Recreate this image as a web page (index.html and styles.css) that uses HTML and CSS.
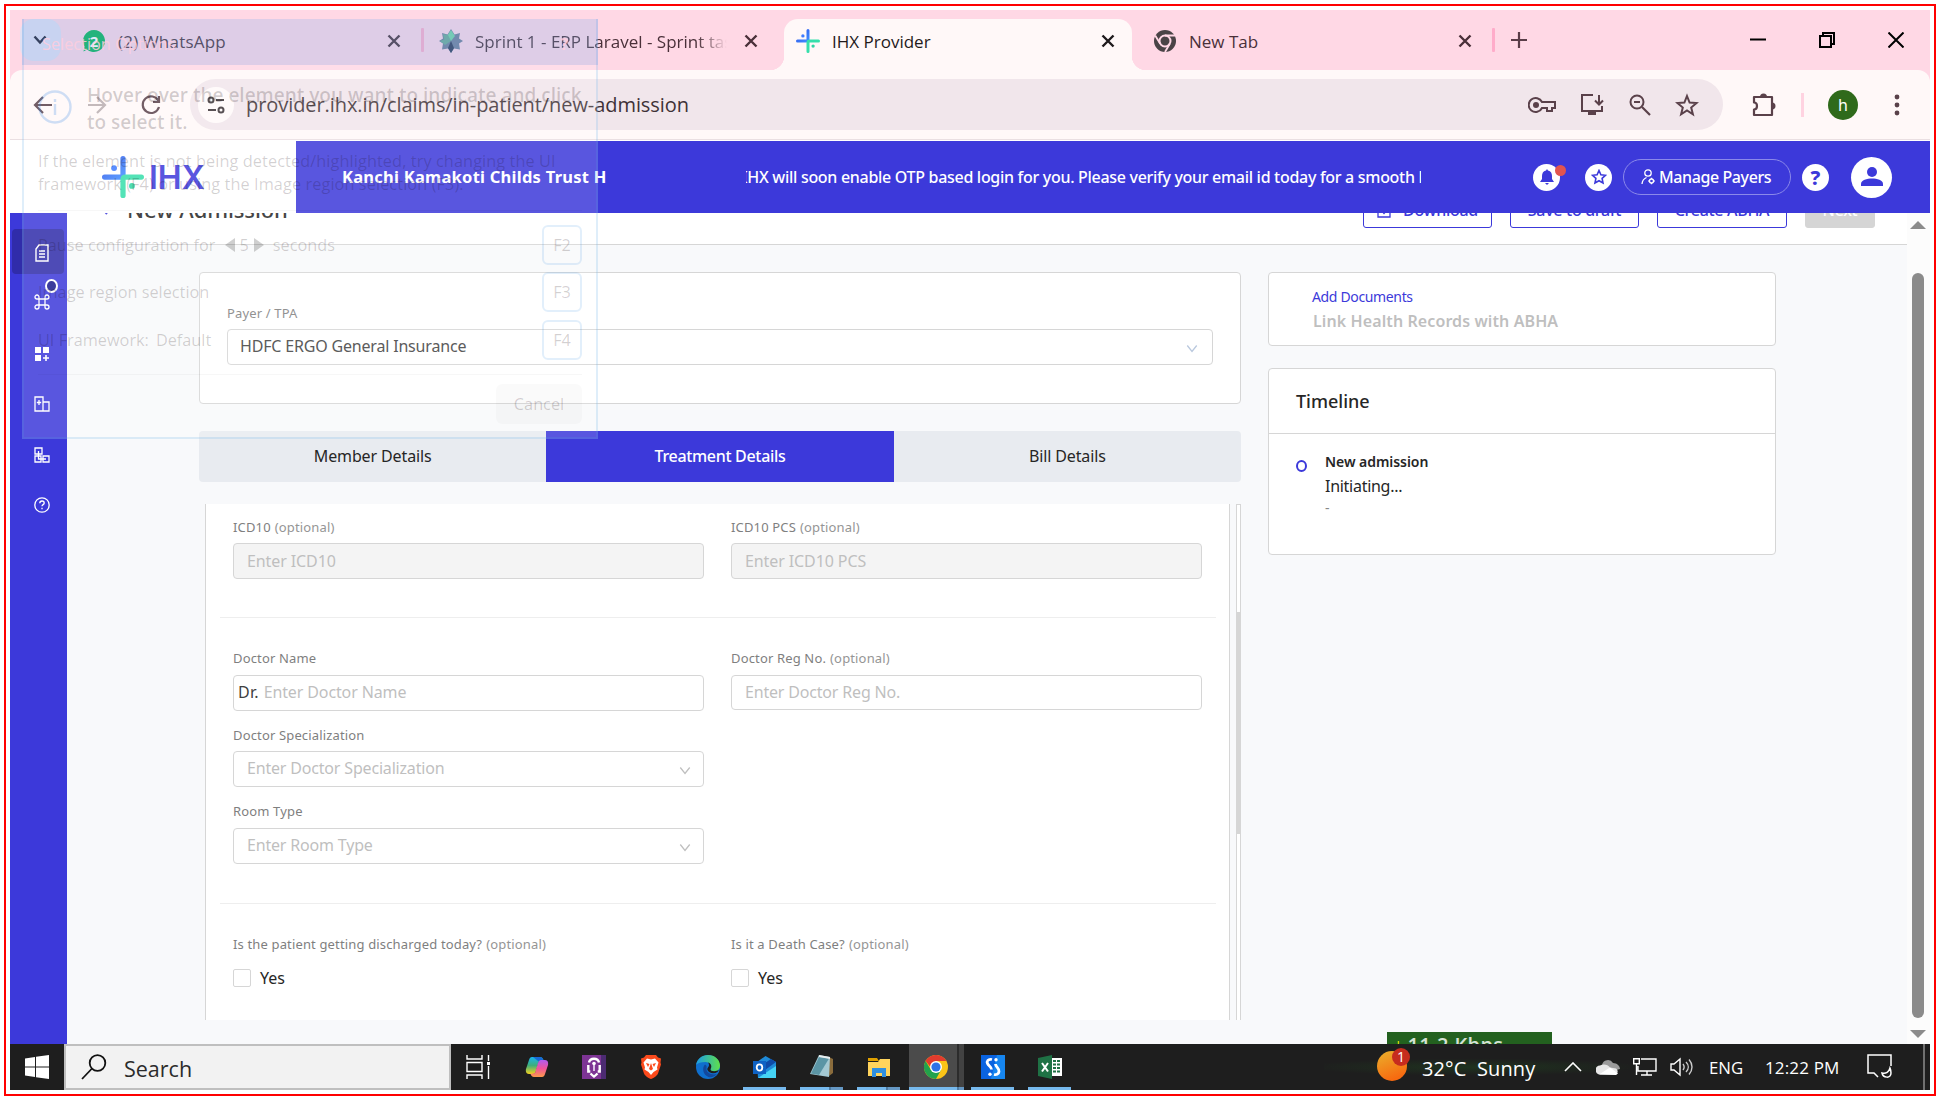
FILE: index.html
```html
<!DOCTYPE html>
<html lang="en">
<head>
<meta charset="utf-8">
<title>IHX Provider</title>
<link rel="stylesheet" href="styles.css">
</head>
<body>
<svg width="0" height="0" class="defs">
  <defs>
    <linearGradient id="gBlue" x1="0" y1="0" x2="1" y2="1"><stop offset="0" stop-color="#2f52e8"/><stop offset="1" stop-color="#3f8cff"/></linearGradient>
    <linearGradient id="gSun" x1="0" y1="0" x2="0.4" y2="1"><stop offset="0" stop-color="#eab12c"/><stop offset="1" stop-color="#f76a10"/></linearGradient>
    <linearGradient id="gEdge" x1="0" y1="0" x2="1" y2="0"><stop offset="0" stop-color="#1a9be8"/><stop offset="1" stop-color="#5fe04a"/></linearGradient>
    <linearGradient id="gCopA" x1="0" y1="0" x2="0" y2="1"><stop offset="0" stop-color="#18b4f0"/><stop offset=".5" stop-color="#3fae7a"/><stop offset="1" stop-color="#f5d21e"/></linearGradient>
    <linearGradient id="gCopB" x1="0" y1="0" x2="0" y2="1"><stop offset="0" stop-color="#b05bf0"/><stop offset=".5" stop-color="#f0549a"/><stop offset="1" stop-color="#fd9a4a"/></linearGradient>
    <symbol id="x" viewBox="0 0 14 14"><path d="M1.5 1.5l11 11M12.5 1.5l-11 11" stroke="currentColor" stroke-width="2.4" fill="none"/></symbol>
    <symbol id="plusmark" viewBox="0 0 40 40">
      <path d="M20 2.500V17.500Q20 20 17.500 20H2.500" fill="none" stroke="url(#gBlue)" stroke-width="5" stroke-linecap="round"/>
      <path d="M20 37.500V22.500Q20 20 22.500 20H37.500" fill="none" stroke="#36dfab" stroke-width="5" stroke-linecap="round"/>
      <circle cx="11.500" cy="11.500" r="2.800" fill="#3f7bff"/><circle cx="28.500" cy="28.500" r="2.800" fill="#2fd6a4"/>
    </symbol>
    <symbol id="down" viewBox="0 0 14 10"><path d="M1.500 1.500L7 8.500l5.500-7" fill="none" stroke="currentColor" stroke-width="1.500"/></symbol>
  </defs>
</svg>
<div class="frame">
<div class="screen">

  <div class="tabstrip">
    <span class="tabsearch"><svg width="14" height="10" viewBox="0 0 14 10"><path d="M1.500 1.500L7 7.500l5.500-6" fill="none" stroke="#1c1b2e" stroke-width="2.400"/></svg></span>
    <div class="tab"><svg class="fav" viewBox="0 0 24 24"><path d="M12 1a11 11 0 1 1-7 19.500L1.500 22.500l1-5A11 11 0 0 1 12 1z" fill="#04b455"/><text x="12" y="17.500" text-anchor="middle" font-size="15" font-weight="700" fill="#fff">2</text></svg><span class="label t1">(2) WhatsApp</span><svg class="close"><use href="#x"/></svg></div>
    <i class="sep"></i>
    <div class="tab"><svg class="fav" viewBox="0 0 24 24"><path d="M12 0l3.500 5.500L21 4l-1 5.500 4 2.500-4 2.500 1 6-6-1L12 24l-3-4.500-6 1 1-6L0 12l4-2.500L3 4l5.500 1.500z" fill="#6f7d98"/><path d="M12 1l4 6-4 5-4-5z" fill="#72d3a3"/><path d="M4 5l5 1 3 6-7-2zM1 12l5-2 6 2-6 4z" fill="#69a894"/><path d="M12 12l3 7-3 5-3-5z" fill="#2e3a57"/></svg><span class="label t2">Sprint 1 - ERP Laravel - Sprint tasks</span><svg class="close"><use href="#x"/></svg></div>
    <i class="sep none"></i>
    <div class="tab active"><svg class="fav" viewBox="0 0 40 40"><use href="#plusmark"/></svg><span class="label t3">IHX Provider</span><svg class="close"><use href="#x"/></svg></div>
    <i class="sep none"></i>
    <div class="tab"><svg class="fav" viewBox="0 0 24 24"><circle cx="12" cy="12" r="11" fill="#4a4346"/><circle cx="12" cy="12" r="5.500" fill="none" stroke="#ffd8e5" stroke-width="2"/><path d="M12 6.500h10M7.200 14.800L2.200 6.500M16.800 14.800L12 23" stroke="#ffd8e5" stroke-width="1.800"/></svg><span class="label t4">New Tab</span><svg class="close"><use href="#x"/></svg></div>
    <i class="sep"></i>
    <svg class="plus" width="16" height="16" viewBox="0 0 16 16"><path d="M8 0v16M0 8h16" stroke="#5a3d48" stroke-width="2.200"/></svg>
    <div class="winctl">
      <svg width="16" height="16" viewBox="0 0 16 16"><path d="M0 7.500h16" stroke="#000" stroke-width="2"/></svg>
      <svg width="16" height="16" viewBox="0 0 16 16"><path d="M4 4V1h11v11h-3M1 4h11v11H1z" fill="none" stroke="#000" stroke-width="2"/></svg>
      <svg width="16" height="16" viewBox="0 0 16 16"><path d="M.5.500l15 15M15.500.500l-15 15" stroke="#000" stroke-width="2"/></svg>
    </div>
  </div>

  <div class="toolbar">
    <div class="navs">
      <svg width="22" height="22" viewBox="0 0 22 22"><path d="M20 11H4M11 3l-8 8 8 8" fill="none" stroke="#5a414a" stroke-width="2.200"/></svg>
      <svg width="22" height="22" viewBox="0 0 22 22"><path d="M2 11h16M11 3l8 8-8 8" fill="none" stroke="#b9adb0" stroke-width="2.200"/></svg>
      <svg width="22" height="22" viewBox="0 0 22 22"><path d="M18.500 7A8.300 8.300 0 1 0 19 13M19 2v6h-6" fill="none" stroke="#5a414a" stroke-width="2.200"/></svg>
    </div>
    <div class="omni">
      <span class="site"><svg width="20" height="20" viewBox="0 0 20 20"><g fill="none" stroke="#3b3337" stroke-width="2"><circle cx="5" cy="5" r="2.500"/><path d="M10 5h8M2 15h8"/><circle cx="15" cy="15" r="2.500"/></g></svg></span>
      <span class="url">provider.ihx.in/claims/in-patient/new-admission</span>
      <div class="omni-icons">
        <svg width="28" height="20" viewBox="0 0 28 20"><g fill="none" stroke="#5a414a" stroke-width="2"><path d="M14 7A7 7 0 1 0 14 13H19V16H24V13H27V7z"/></g><circle cx="8" cy="10" r="3" fill="#5a414a"/></svg>
        <svg width="26" height="24" viewBox="0 0 26 24"><path d="M14 2H3v16h20v-5M20 2v9M16 7.500l4 4 4-4" fill="none" stroke="#5a414a" stroke-width="2"/><path d="M9 19h8v3H9z" fill="#5a414a"/></svg>
        <svg width="24" height="24" viewBox="0 0 24 24"><circle cx="9" cy="9" r="6.500" fill="none" stroke="#5a414a" stroke-width="2"/><path d="M6 9h6M14 14l8 8" stroke="#5a414a" stroke-width="2.200"/></svg>
        <svg width="24" height="24" viewBox="0 0 24 24"><path d="M12 3l2.600 6.500 7 .500-5.400 4.500 1.700 6.800L12 17.500l-5.900 3.800 1.700-6.800L2.400 10l7-.500z" fill="none" stroke="#5a414a" stroke-width="2"/></svg>
      </div>
    </div>
    <svg class="puzzle" width="26" height="26" viewBox="0 0 26 26"><path d="M3 5h18v18H3v-5.500c4 0 4-7 0-7z" fill="none" stroke="#5a414a" stroke-width="2.200" stroke-linejoin="round"/><path d="M9 5a3.500 3.500 0 0 1 7 0zM21 10.500a3.500 3.500 0 0 1 0 7z" fill="#5a414a"/></svg>
    <i class="tsep"></i>
    <span class="avatar">h</span>
    <svg class="dots" width="6" height="22" viewBox="0 0 6 22"><g fill="#5a414a"><circle cx="3" cy="3" r="2.400"/><circle cx="3" cy="11" r="2.400"/><circle cx="3" cy="19" r="2.400"/></g></svg>
  </div>

  <div class="app">
    <header class="apphead">
      <div class="brand"><svg width="42" height="42" viewBox="0 0 40 40"><use href="#plusmark"/></svg><b>IHX</b></div>
      <div class="bar">
        <strong class="hospital">Kanchi Kamakoti Childs Trust H</strong>
        <div class="marquee"><span>IHX will soon enable OTP based login for you. Please verify your email id today for a smooth login</span></div>
        <span class="circ bell"><svg width="14" height="16" viewBox="0 0 14 16"><path d="M7 0l1 1.500c3 .8 4 3 4 5.500v3l2 3H0l2-3V7c0-2.500 1-4.700 4-5.500zM5 14h4l-2 2z" fill="#3c39da"/></svg><i class="reddot"></i></span>
        <span class="circ star"><svg width="16" height="16" viewBox="0 0 16 16"><path d="M8 1.500l1.900 4.300 4.600.5-3.400 3.100.9 4.600L8 11.700 4 14l.9-4.600L1.500 6.300l4.600-.5z" fill="none" stroke="#3c39da" stroke-width="1.600"/></svg></span>
        <span class="manage"><svg width="14" height="16" viewBox="0 0 14 16"><g fill="none" stroke="#fff" stroke-width="1.300"><circle cx="7" cy="4" r="3.200"/><path d="M1 15c.3-4 2.200-5.500 4.500-6.500"/><circle cx="10.500" cy="12" r="2"/><path d="M10.500 8.800v1.200M10.500 14v1.200M7.300 12h1.200M12.500 12h1.200"/></g></svg><em>Manage Payers</em></span>
        <span class="circ help">?</span>
        <span class="user"><svg width="22" height="20" viewBox="0 0 22 20"><circle cx="11" cy="5" r="5" fill="#3c39da"/><path d="M0 19v-2c0-4 6-5.500 11-5.500S22 13 22 17v2z" fill="#3c39da"/></svg></span>
      </div>
    </header>

    <div class="below">
      <nav class="side">
        <span class="sitem on"><svg width="14" height="18" viewBox="0 0 14 18"><path d="M4 1h9v16H1V5zM4 7h6M4 10h6M4 13h6" fill="none" stroke="#fff" stroke-width="1.400"/></svg></span>
        <span class="sitem"><svg width="16" height="16" viewBox="0 0 16 16"><path d="M5 5V3a2 2 0 1 0-2 2h10a2 2 0 1 0-2-2v10a2 2 0 1 0 2-2H3a2 2 0 1 0 2 2z" fill="none" stroke="#fff" stroke-width="1.300"/></svg><i class="badge"></i></span>
        <span class="sitem"><svg width="14" height="14" viewBox="0 0 14 14"><path d="M0 0h6v6H0zM8 0h6v6H8zM0 8h6v6H0zM10.200 8h1.600v2.200H14v1.600h-2.200V14h-1.600v-2.200H8v-1.600h2.200z" fill="#fff"/></svg></span>
        <span class="sitem"><svg width="16" height="16" viewBox="0 0 16 16"><path d="M1 1h8v14H1zM9 6h6v9H9M5 4v5M2.800 6.500h4.400" fill="none" stroke="#fff" stroke-width="1.300"/></svg></span>
        <span class="sitem"><svg width="16" height="16" viewBox="0 0 16 16"><path d="M1 1h7v6H1zM1 9h6v6H1zM9 9h6v6H9zM4.500 4v8H12" fill="none" stroke="#fff" stroke-width="1.300"/></svg></span>
        <span class="sitem"><svg width="16" height="16" viewBox="0 0 16 16"><circle cx="8" cy="8" r="7.200" fill="none" stroke="#fff" stroke-width="1.300"/><path d="M5.800 6.200c0-3 4.400-2.800 4.400-.2 0 1.700-2.200 1.600-2.200 3.300M8 10.700v1.600" fill="none" stroke="#fff" stroke-width="1.300"/></svg></span>
      </nav>
      <main class="page">
        <div class="pagehead">
          <svg class="backarr" width="10" height="18" viewBox="0 0 10 18"><path d="M9 1L2 9l7 8" fill="none" stroke="#3c39da" stroke-width="2"/></svg>
          <h1>New Admission</h1>
          <div class="actions">
            <span class="btn"><svg width="14" height="16" viewBox="0 0 14 16"><path d="M4 2H1v13h12V2h-3M7 0v11M4 8l3 3.500L10 8" fill="none" stroke="#3c39da" stroke-width="1.300"/></svg>Download</span>
            <span class="btn">Save to draft</span>
            <span class="btn abha">Create ABHA</span>
            <span class="btn next">Next</span>
          </div>
        </div>
        <div class="cols">
          <div class="left">
            <section class="payer card">
              <label class="lab">Payer / TPA</label>
              <div class="field sel dark"><span>HDFC ERGO General Insurance</span><svg class="caret blue"><use href="#down"/></svg></div>
            </section>
            <div class="steps"><span>Member Details</span><span class="cur">Treatment Details</span><span>Bill Details</span></div>
            <div class="scroller">
              <div class="form">
                <div class="group g1">
                  <div class="item"><label class="lab">ICD10 <i>(optional)</i></label><div class="field off"><span>Enter ICD10</span></div></div>
                  <div class="item"><label class="lab">ICD10 PCS <i>(optional)</i></label><div class="field off"><span>Enter ICD10 PCS</span></div></div>
                </div>
                <div class="group g2">
                  <div class="item"><label class="lab">Doctor Name</label><div class="field dr"><b>Dr.</b><span>Enter Doctor Name</span></div></div>
                  <div class="item"><label class="lab">Doctor Reg No. <i>(optional)</i></label><div class="field reg"><span>Enter Doctor Reg No.</span></div></div>
                  <div class="item spec"><label class="lab">Doctor Specialization</label><div class="field sel"><span>Enter Doctor Specialization</span><svg class="caret"><use href="#down"/></svg></div></div>
                  <div class="item"></div>
                  <div class="item"><label class="lab">Room Type</label><div class="field sel"><span>Enter Room Type</span><svg class="caret"><use href="#down"/></svg></div></div>
                </div>
                <div class="group g3">
                  <div class="item"><label class="lab">Is the patient getting discharged today? <i>(optional)</i></label><div class="check"><i></i>Yes</div></div>
                  <div class="item"><label class="lab">Is it a Death Case? <i>(optional)</i></label><div class="check"><i></i>Yes</div></div>
                </div>
              </div>
              <div class="track"><div class="thumb"></div></div>
            </div>
          </div>
          <aside class="right">
            <section class="card docs"><a>Add Documents</a><b>Link Health Records with ABHA</b></section>
            <section class="card time">
              <h2>Timeline</h2>
              <div class="event"><i></i><div><b>New admission</b><p>Initiating...</p><small>-</small></div></div>
            </section>
          </aside>
        </div>
        <div class="speed"><span><i>↓</i>11.2 Kbps</span></div>
      </main>
      <div class="vscroll"><i class="up"></i><div class="bigthumb"></div><i class="dn"></i></div>
    </div>
  </div>

  <div class="taskbar">
    <span class="start"><svg width="24" height="24" viewBox="0 0 24 24"><path d="M0 3.500L10 2v9.500H0zM11 1.800L24 0v11.500H11zM0 12.500h10V22L0 20.500zM11 12.500h13V24l-13-1.800z" fill="#fff"/></svg></span>
    <div class="search"><svg width="26" height="26" viewBox="0 0 26 26"><circle cx="16.500" cy="9" r="7.800" fill="none" stroke="#111" stroke-width="1.800"/><path d="M11 14.500L1 25" stroke="#111" stroke-width="1.800"/></svg><span>Search</span></div>
    <div class="apps">
      <span class="view"><svg width="24" height="24" viewBox="0 0 24 24"><path d="M1 0v4h15V0M1 24v-4h15v4M1 7.500h15v9H1zM22.500 0v6M22.500 11v13" fill="none" stroke="#fff" stroke-width="1.400"/><path d="M21 7h3v3h-3z" fill="#fff"/></svg></span>
      <span><svg width="24" height="24" viewBox="0 0 24 24"><path d="M7 2h8c2 0 3 1.500 3.500 3L14 6l-3 10c-.8 2.500-2 3-4 3H4c-3 0-3.500-3-3-5L4 5c.5-2 1.500-3 3-3z" fill="url(#gCopA)"/><path d="M8 2h7c2 0 3 1.500 3.500 4H13z" fill="#1769d6"/><path d="M17 22H9c-2 0-3-1.500-3.500-3L10 18l3-10c.8-2.500 2-3 4-3h3c3 0 3.500 3 3 5l-3 9c-.5 2-1.500 3-3 3z" fill="url(#gCopB)"/></svg></span>
      <span><svg width="24" height="24" viewBox="0 0 24 24"><path d="M0 0h24v24H0z" fill="#7d3494"/><path d="M19 0h5v24h-5z" fill="#4c2b72"/><path d="M7 7.500C8 2.500 16 2.500 17 7.500M6.300 10v6.500h2M17.700 10v6.500h-2M8.500 18.500c1 1 2 2 3.500 3 1.500-1 2.500-2 3.500-3" fill="none" stroke="#fff" stroke-width="2.400"/><circle cx="12" cy="8.500" r="1.800" fill="#fff"/><path d="M11 10h2v6h-2z" fill="#d9bfe2"/></svg></span>
      <span><svg width="22" height="24" viewBox="0 0 22 24"><path d="M6 0h10l2 2.500 3 1-.5 4 .5 2-3 9c-1 2.500-5 5-7 5.500-2-.5-6-3-7-5.500L1 9.500l.5-2-.5-4 3-1z" fill="#fb4a1c"/><path d="M11 4.500l4-1 3.500 4-1.500 5 .5 2-4 2.500-2.500 3-2.500-3-4-2.500.5-2-1.500-5L7 3.500z" fill="#fff"/><path d="M6 8l3.500 1-1.500 3zM16 8l-3.500 1 1.500 3zM9 14l2 1.500 2-1.500-2-6z" fill="#fb4a1c"/></svg></span>
      <span><svg width="24" height="24" viewBox="0 0 24 24"><circle cx="12" cy="12" r="12" fill="#0f6fce"/><path d="M0 10C1 4 6 0 12 0c7 0 12 5 12 10.500 0 4-3 6-6.500 6-2.500 0-4-1-3-2.500 2-3-.5-7-5-7C5 7 1.500 8 0 10z" fill="url(#gEdge)"/><path d="M9 9.500c-3 3-2.500 10 3.500 12.500 3 .8 6.500-.5 8.500-3-5 1.500-11-1-10.500-5.500 0-2 .8-2.500-1.500-4z" fill="#12489c"/><path d="M14.500 14c2-3 0-6-2.500-6.500 3 4-1.500 5-.5 7.500 1 3 6 4.500 10 2l1.500-2c-2 1.500-9 2-8.500-1z" fill="#1e1e1e"/></svg></span>
      <span class="run"><svg width="24" height="24" viewBox="0 0 24 24"><path d="M4 7l8.500-6L23 7v16H5z" fill="#1e8ad8"/><path d="M5 23l18-12v12z" fill="#45d3f5"/><path d="M23 7L12 15V8l6-4z" fill="#0f4ba8"/><path d="M0 6h13v13H0z" fill="#0f62c4"/><ellipse cx="6.500" cy="12.500" rx="2.800" ry="3.200" fill="none" stroke="#fff" stroke-width="1.800"/></svg></span>
      <span class="run multi"><svg width="24" height="24" viewBox="0 0 24 24"><path d="M19 2l4 2v14l-4 3z" fill="#8a6c3c"/><path d="M9 0l11 2-1 20L0 19z" fill="#a4c9d3"/><path d="M9 2l10 1.500L9 20l-8-1.500z" fill="#5b95a5"/><path d="M9 0l11 2v2L9 2z" fill="#e9eef0"/></svg></span>
      <span class="run multi"><svg width="22" height="22" viewBox="0 0 22 22"><path d="M0 2h9l2 3H0z" fill="#e0a100"/><path d="M0 6h10l2-3h10v17H0z" fill="#ffd45c"/><path d="M4 12h14v9h-4v-4H8v4H4z" fill="#2f8fe0"/></svg></span>
      <span class="run multi cur"><svg width="24" height="24" viewBox="0 0 24 24"><circle cx="12" cy="12" r="12" fill="#fbc417"/><path d="M1.600 6A12 12 0 0 1 22.400 6H12L8 14z" fill="#e33b2e"/><path d="M1.600 6A12 12 0 0 0 12 24l5-9-10 0z" fill="#22a24c"/><circle cx="12" cy="12" r="6" fill="#fff"/><circle cx="12" cy="12" r="4.600" fill="#2d72e8"/></svg></span>
      <span class="run"><svg width="24" height="24" viewBox="0 0 24 24"><path d="M0 0h24v24H0z" fill="#0a63e0"/><path d="M16 0h8v24H10z" fill="#1686f0"/><path d="M11 4.500c-4-1-5.500 2-4.500 4 1 2.500 4 3 4 6M14.500 9c0 3 4 4 3.500 7.500-.3 3-3 3.500-5 3" fill="none" stroke="#fff" stroke-width="2.800"/><circle cx="15" cy="4.700" r="1.700" fill="#fff"/><circle cx="9" cy="19.300" r="1.700" fill="#fff"/></svg></span>
      <span class="run"><svg width="24" height="24" viewBox="0 0 24 24"><path d="M13 3h11v18H13z" fill="#fff"/><path d="M15 5h3v2h-3zM19 5h3v2h-3zM15 8.500h3v2h-3zM19 8.500h3v2h-3zM15 12h3v2h-3zM19 12h3v2h-3zM15 15.500h3v2h-3zM19 15.500h3v2h-3z" fill="#1f7145"/><path d="M0 3l14-3v24L0 21z" fill="#1f7145"/><path d="M4 8l6 8.500M10 8l-6 8.500" stroke="#fff" stroke-width="2"/></svg></span>
    </div>
    <div class="tray">
      <svg class="sun" width="36" height="34" viewBox="0 0 36 34"><circle cx="16" cy="18" r="15" fill="url(#gSun)"/><circle cx="25" cy="9" r="9" fill="#c62c1e"/><text x="25" y="14" text-anchor="middle" font-size="14" fill="#fff">1</text></svg>
      <span class="temp">32°C&nbsp; Sunny</span>
      <svg class="chev" width="18" height="10" viewBox="0 0 18 10"><path d="M1 9l8-8 8 8" fill="none" stroke="#fff" stroke-width="1.600"/></svg>
      <svg class="cloud" width="24" height="16" viewBox="0 0 24 16"><path d="M6 6a6 6 0 0 1 11-2c4 0 7 3 7 6l-11 3z" fill="#9b9b9b"/><path d="M4 15.500a4.500 4.500 0 0 1 0-9c4-2 8-.5 10 2l6 1a3.500 3.500 0 0 1 0 6z" fill="#e8e8e8"/><path d="M3 15.500l11-7 8 6-2 1.500z" fill="#fff"/></svg>
      <svg class="net" width="24" height="18" viewBox="0 0 24 18"><path d="M8 1h15v12H5V8M14 13v4M8 17h11M.7.700h5.600v5H.7zM3.500 6v11" fill="none" stroke="#fff" stroke-width="1.400"/></svg>
      <svg class="vol" width="24" height="20" viewBox="0 0 24 20"><path d="M1 7h3l6-5v16l-6-5H1z" fill="none" stroke="#fff" stroke-width="1.400"/><path d="M13 7c1.500 2 1.500 4 0 6M16 5c3 3 3 7 0 10M19 2.500c4 4.500 4 10.500 0 15" fill="none" stroke="#ccc" stroke-width="1.400"/></svg>
      <span class="eng">ENG</span><span class="clock">12:22 PM</span>
      <svg class="note" width="26" height="26" viewBox="0 0 26 26"><path d="M24 12V1H1v18h6l4 4M23 14c-1 4-4 6-8 5 1 5 9 6 9 0 0-2 0-3-1-5z" fill="none" stroke="#fff" stroke-width="1.500"/></svg>
      <i class="peek"></i>
    </div>
  </div>

  <div class="picker">
    <div class="ptitle"><span>Selection Options</span><b>?</b></div>
    <div class="pbody">
      <div class="phint"><svg width="34" height="34" viewBox="0 0 34 34"><circle cx="17" cy="17" r="15.500" fill="none" stroke="currentColor" stroke-width="2.400"/><path d="M17 14v11M17 9v3" stroke="currentColor" stroke-width="2.400"/></svg><b>Hover over the element you want to indicate and click<br>to select it.</b></div>
      <p>If the element is not being detected/highlighted, try changing the UI<br>framework (F4) or using the Image region selection (F3).</p>
      <div class="opts">
        <div><span>Pause configuration for</span><i class="tl"></i><span>5</span><i class="tr"></i><span>seconds</span><kbd>F2</kbd></div>
        <div><span>Image region selection</span><kbd>F3</kbd></div>
        <div><span>UI Framework:</span><span class="fw">Default</span><kbd>F4</kbd></div>
      </div>
      <div class="pfoot"><span>Cancel</span></div>
    </div>
  </div>
</div>
</div>
</body>
</html>
```
FILE: styles.css
```css
* { box-sizing: border-box; }
body { margin: 0; background: #fff; font-family: "Noto Sans", "Open Sans", sans-serif; font-size: 16px; color: #262626; white-space: nowrap; }
i, em { font-style: normal; }
.defs { position: absolute; }
svg { display: block; flex: none; }
.frame { width: 1932px; height: 1092px; margin: 4px; border: 2px solid #f00; padding: 4px; overflow: hidden; }
.screen { position: relative; width: 1920px; height: 1080px; overflow: hidden; display: flex; flex-direction: column; }

/* browser tabs */
.tabstrip { height: 60px; background: #ffd8e5; display: flex; flex: none; padding: 9px 0 0 10px; font-family: "Open Sans", sans-serif; font-size: 17px; color: #4a3039; }
.tabsearch { width: 41px; height: 42px; border-radius: 14px; background: #e2e0f2; display: flex; align-items: center; justify-content: center; margin-right: 9px; padding-right: 2px; }
.tab { width: 348px; height: 51px; display: flex; align-items: center; padding: 0 17px 7px 12px; position: relative; }
.tab .fav { width: 24px; height: 24px; margin-right: 12px; }
.tab .label { width: 252px; overflow: hidden; }
.tab .t1 { letter-spacing: .2px; }
.tab .t2 { -webkit-mask-image: linear-gradient(90deg, #000 88%, transparent 100%); mask-image: linear-gradient(90deg, #000 88%, transparent 100%); }
.tab .close { width: 14px; height: 14px; margin-left: 17px; }
.tab.active { background: #fff8f8; color: #1f1a1c; border-radius: 14px 14px 0 0; }
.tab.active::before, .tab.active::after { content: ""; position: absolute; bottom: 0; width: 14px; height: 14px; }
.tab.active::before { left: -14px; background: radial-gradient(circle at 0 0, #ffd8e5 14px, #fff8f8 14.5px); }
.tab.active::after { right: -14px; background: radial-gradient(circle at 100% 0, #ffd8e5 14px, #fff8f8 14.5px); }
.sep { width: 3px; height: 24px; margin: 9px 3px 0; background: #ffacca; border-radius: 1px; }
.sep.none { background: none; }
.plus { margin: 13px 0 0 13px; }
.winctl { margin: 13px 26px 0 auto; display: flex; gap: 53px; }

/* toolbar */
.toolbar { height: 70px; flex: none; background: linear-gradient(#ffd8e5, #ffd8e5) 0 0 / 100% 14px no-repeat; display: flex; align-items: center; border-bottom: 1px solid #eadfe2; position: relative; z-index: 0; }
.toolbar::before { content: ""; position: absolute; inset: 0; background: #fff8f8; border-radius: 12px 12px 0 0; z-index: -1; }
.navs { display: flex; gap: 32px; margin-left: 22px; }
.omni { width: 1533px; height: 51px; margin-left: 28px; border-radius: 26px; background: #f1e6eb; display: flex; align-items: center; }
.site { width: 36px; height: 36px; border-radius: 50%; background: #fffafa; margin-left: 8px; display: flex; align-items: center; justify-content: center; }
.url { margin-left: 12px; font-family: "Open Sans", sans-serif; font-size: 20px; letter-spacing: -.07px; color: #3f3237; }
.omni-icons { margin: 0 24px 0 auto; display: flex; gap: 23px; align-items: center; }
.puzzle { margin-left: 28px; }
.tsep { width: 3px; height: 24px; background: #ffd3e1; margin-left: 24px; }
.avatar { width: 30px; height: 30px; margin-left: 24px; border-radius: 50%; background: #2f6a1b; color: #fff; font-size: 16px; display: flex; align-items: center; justify-content: center; }
.dots { margin-left: 36px; }

/* application header */
.app { height: 904px; flex: none; display: flex; flex-direction: column; background: #fff; padding-top: 1px; position: relative; z-index: 0; }
.apphead { height: 72px; flex: none; display: flex; position: relative; z-index: 2; background: #fff; }
.brand { width: 286px; display: flex; align-items: center; padding-left: 92px; color: #3c39da; }
.brand b { font-family: Inter, sans-serif; font-size: 32px; font-weight: 600; margin-left: 5px; }
.bar { flex: 1; background: #3c39da; color: #fff; display: flex; align-items: center; padding-left: 46px; }
.hospital { width: 404px; font-weight: 700; font-size: 16.500px; letter-spacing: .25px; margin-top: -1px; }
.marquee { width: 675px; overflow: hidden; margin-right: 112px; font-weight: 500; letter-spacing: -.3px; }
.marquee span { display: block; margin-left: -4px; }
.circ { width: 27px; height: 27px; border-radius: 50%; background: #fff; display: flex; align-items: center; justify-content: center; position: relative; flex: none; }
.reddot { position: absolute; width: 11px; height: 11px; left: 22px; top: 1px; border-radius: 50%; background: #e2544f; }
.star { margin-left: 25px; }
.manage { width: 168px; height: 36px; border: 1px solid #8b89ea; border-radius: 18px; margin-left: 11px; display: flex; align-items: center; padding-left: 17px; font-weight: 500; flex: none; letter-spacing: -.4px; }
.manage em { margin-left: 4px; }
.help { margin-left: 11px; color: #3c39da; font-weight: 800; font-size: 20px; }
.user { width: 41px; height: 41px; margin-left: 22px; border-radius: 50%; background: #fff; display: flex; align-items: center; justify-content: center; flex: none; }

/* body */
.below { flex: 1; min-height: 0; display: flex; }
.side { width: 57px; background: #3c39da; padding: 16px 3px 0 2px; display: flex; flex-direction: column; gap: 5.600px; }
.sitem { height: 45px; position: relative; display: flex; align-items: center; justify-content: center; padding-left: 8px; border-radius: 4px; }
.sitem.on { background: #302caa; padding-top: 3px; }
.sitem:nth-child(2) { margin-bottom: 1px; }
.badge { position: absolute; width: 13px; height: 14px; border: 2px solid #fff; border-radius: 50%; background: #1b1a8c; left: 33px; top: -1px; }
.page { width: 1840px; background: #f8f9fb; position: relative; overflow: hidden; }
.pagehead { height: 64px; margin-top: -32px; background: #fff; border-bottom: 1px solid #d6d6d6; display: flex; padding: 11px 32px 0 31px; }
.backarr { margin-top: 5px; }
h1 { margin: 2px 0 0 19px; font-size: 22px; line-height: 30px; font-weight: 500; letter-spacing: -.1px; }
.actions { margin: 0 0 0 auto; display: flex; gap: 18px; height: 36px; }
.btn { width: 129px; height: 36px; border: 1px solid #3c39da; border-radius: 3px; color: #3c39da; display: flex; align-items: center; justify-content: center; gap: 12px; font-weight: 500; letter-spacing: -.3px; }
.btn.abha { width: 130px; }
.btn.next { width: 70px; background: #d5d5d5; border-color: #d5d5d5; color: #fff; }
.cols { display: flex; padding: 27px 0 0 132px; gap: 27px; }
.left { width: 1042px; }
.card { background: #fff; border: 1px solid #d6d6d6; border-radius: 4px; }
.payer { height: 132px; padding: 30px 27px 0; margin-bottom: 27px; }
.lab { display: block; font-size: 13px; line-height: 20px; color: #7f7f7f; letter-spacing: .15px; }
.lab i { color: #959595; margin-left: .5px; }
.field { height: 36px; border: 1px solid #d6d6d6; border-radius: 4px; padding: 0 12px 2px 13px; display: flex; align-items: center; color: #bfbfbf; background: #fff; margin-top: 6px; letter-spacing: -.18px; }
.field.dark { color: #404040; padding-left: 12px; }
.field.off { background: #f4f4f4; padding-bottom: 0; letter-spacing: -.1px; }
.field.reg { height: 35px; padding-bottom: 1px; }
.field.dr { padding-left: 4px; letter-spacing: -.12px; }
.field.dr b { font-weight: 400; color: #404040; margin-right: 5px; letter-spacing: .2px; }
.caret { width: 12px; height: 9px; margin: 4px 0 0 auto; }
.caret.blue { color: #b9c8de; margin-right: 2px; }
.steps { height: 51px; display: flex; background: #e8ebf0; border-radius: 4px; overflow: hidden; }
.steps span { flex: 1; display: flex; align-items: center; justify-content: center; padding-bottom: 1px; letter-spacing: -.12px; }
.steps .cur { background: #3c39da; color: #fff; font-weight: 500; letter-spacing: -.32px; }
.scroller { height: 516px; margin: 22px 0 0 6px; display: flex; justify-content: space-between; }
.form { width: 1025px; background: #fff; border: solid #d6d6d6; border-width: 0 1px; padding: 13px 13px 0 14px; }
.group { display: grid; grid-template-columns: 471px 471px; column-gap: 27px; padding-left: 13px; border-bottom: 1px solid #eee; }
.g1 { height: 101px; }
.g2 { height: 286px; padding-top: 30px; grid-template-rows: 77px 76px 76px; }
.g3 { border: 0; padding-top: 30px; }
.g1 .field { margin-top: 6px; }
.g2 .field { margin-top: 7px; }
.g2 .spec .field { margin-top: 6px; }
.check { display: flex; align-items: center; gap: 9px; margin-top: 12px; height: 24px; }
.check i { width: 18px; height: 18px; border: 1px solid #d6d6d6; border-radius: 2px; }
.track { width: 5px; border: 1px solid #d6d6d6; border-bottom: 0; background: #fff; }
.thumb { height: 222px; margin: 107px -1px 0; background: #d6d6d6; }
.right { width: 508px; }
.docs { height: 74px; padding: 14px 0 0 43px; margin-bottom: 22px; display: flex; flex-direction: column; }
.docs a { font-size: 14px; line-height: 20px; color: #3c39da; letter-spacing: -.35px; }
.docs b { color: #bfbfbf; line-height: 24px; margin: 2px 0 0 1px; font-weight: 600; letter-spacing: .1px; }
.time { height: 187px; }
h2 { margin: 0; height: 65px; border-bottom: 1px solid #d6d6d6; padding: 0 0 1px 27px; display: flex; align-items: center; font-size: 18px; font-weight: 500; }
.event { display: flex; padding: 17px 0 0 27px; }
.event > i { width: 11px; height: 12px; border: 2px solid #3c39da; border-radius: 50%; margin: 9px 18px 0 0; }
.event b { display: block; font-size: 14px; line-height: 22px; font-weight: 600; letter-spacing: -.05px; }
.event p { margin: 0; line-height: 26px; letter-spacing: -.28px; }
.event small { display: block; font-size: 14px; line-height: 18px; color: #888; }
.speed { position: absolute; left: 1320px; top: 819px; width: 165px; height: 12px; background: #23611f; overflow: hidden; color: #d5e2d4; padding-left: 6px; }
.speed span { display: block; font: 600 20px/26px "Open Sans", sans-serif; letter-spacing: .4px; }
.speed i { color: #ff0; margin-right: 4px; }
.vscroll { width: 23px; background: #fcfcfc; display: flex; flex-direction: column; align-items: center; justify-content: space-between; padding: 8px 1px 6px 0; }
.bigthumb { width: 12px; height: 745px; border-radius: 6px; background: #8b8b8b; margin-top: 32px; }
.up, .dn { border: 8px solid transparent; border-top-width: 0; border-bottom: 8px solid #8b8b8b; }
.dn { border-bottom-width: 0; border-top: 8px solid #8b8b8b; }

/* taskbar */
.taskbar { height: 46px; flex: none; background: #1e1e1e; display: flex; font-family: "Open Sans", sans-serif; color: #fff; }
.start { width: 54px; display: flex; align-items: center; justify-content: center; }
.search { width: 387px; border: 2px solid #bfbfbf; background: #f2f2f2; display: flex; align-items: center; color: #2b2b2b; font-size: 21.500px; padding-left: 15px; }
.search span { margin-left: 17px; padding-top: 2px; }
.apps { display: flex; }
.apps span { width: 57px; height: 46px; display: flex; align-items: center; justify-content: center; position: relative; }
.apps .view { padding-right: 4px; }
.apps .run::after { content: ""; position: absolute; left: 7px; bottom: 0; width: 43px; height: 3px; background: #76b9ed; }
.apps .multi::after { background: linear-gradient(90deg, #76b9ed 29px, #4d7ba3 29px 31px, #6598c4 31px); }
.apps .cur { background: linear-gradient(90deg, transparent 2px, #4b4b4b 2px 50px, #2c2c2c 50px 52px, #424242 52px) no-repeat 0 0 / 57px 46px; }
.apps .cur::after { left: 2px; width: 55px; background: linear-gradient(90deg, #76b9ed 48px, #4d7ba3 48px 50px, #6598c4 50px); }
.tray { flex: 1; display: flex; align-items: center; margin-left: 246px; padding-left: 52px; background: radial-gradient(ellipse at 150px 23px, #1f331f 0, #1e1e1e 170px); }
.sun { margin-bottom: 4px; }
.temp { width: 142px; margin-left: 10px; padding-top: 2px; font-size: 20px; letter-spacing: .1px; }
.cloud { margin-left: 14px; }
.net { margin-left: 13px; }
.vol { margin-left: 13px; }
.eng { width: 56px; margin-left: 15px; font-size: 16.800px; }
.clock { width: 74px; font-size: 17px; letter-spacing: .15px; }
.note { margin-left: 28px; }
.peek { width: 2px; height: 46px; background: #707070; margin-left: 30px; }

/* fading element picker dialog */
.picker { position: absolute; z-index: 5; left: 12px; top: 9px; width: 576px; height: 420px; border: 2px solid rgba(80,160,225,.18); border-top: 0; background: rgba(255,255,255,.15); color: rgba(20,5,10,.19); font-family: "Open Sans", sans-serif; font-size: 16.300px; }
.ptitle { height: 46px; margin: 0 -2px; background: rgba(0,103,223,.13); color: rgba(255,205,222,.85); display: flex; align-items: center; justify-content: space-between; padding: 4px 30px 0 20px; }
.pbody { padding: 17px 14px 0 14px; }
.phint { display: flex; height: 68px; }
.phint svg { color: rgba(60,140,230,.25); margin-top: 8px; }
.phint b { font-size: 19px; line-height: 27px; font-weight: 600; margin-left: 15px; }
.pbody p { margin: 0; padding: 0 0 14px; line-height: 23px; border-bottom: 1px solid rgba(0,0,0,.03); letter-spacing: .09px; }
.opts { padding-top: 14px; display: flex; flex-direction: column; gap: 7px; }
.opts div { height: 40.500px; display: flex; align-items: center; padding-bottom: 1px; }
kbd { font: inherit; margin-left: auto; width: 40px; height: 40px; border: 2px solid rgba(60,150,230,.15); border-radius: 6px; display: flex; align-items: center; justify-content: center; }
.tl, .tr { border: 7px solid transparent; border-left-width: 0; border-right: 10px solid rgba(0,0,0,.19); margin: 0 5px 0 9px; }
.tr { border-right-width: 0; border-left: 10px solid rgba(0,0,0,.19); margin: 0 9px 0 5px; }
.fw { margin-left: 7px; }
.pfoot { margin-top: 13px; border-top: 1px solid rgba(0,0,0,.03); padding-top: 9px; display: flex; justify-content: flex-end; }
.pfoot span { width: 86px; height: 40px; background: rgba(0,0,0,.02); border-radius: 6px; display: flex; align-items: center; justify-content: center; }
```
